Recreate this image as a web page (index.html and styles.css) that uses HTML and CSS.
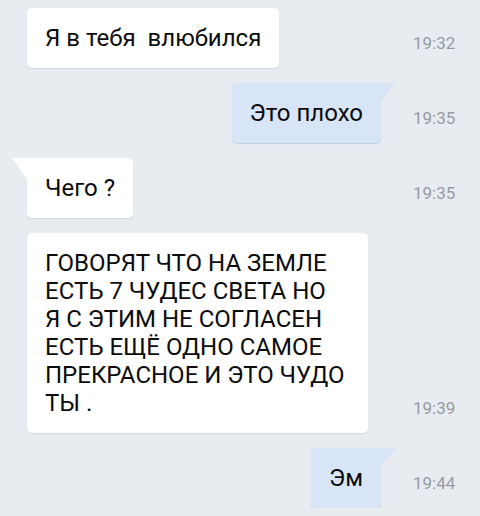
FILE: index.html
```html
<!DOCTYPE html>
<html lang="ru">
<head>
<meta charset="utf-8">
<title>Чат</title>
<link rel="stylesheet" href="styles.css">
</head>
<body>
<div class="chat">
  <div class="row in">
    <div class="msg"><div class="bubble no-tail">Я в тебя  влюбился</div></div>
    <div class="time">19:32</div>
  </div>
  <div class="row out">
    <div class="msg"><div class="bubble">Это плохо</div></div>
    <div class="time">19:35</div>
  </div>
  <div class="row in">
    <div class="msg"><div class="bubble">Чего ?</div></div>
    <div class="time">19:35</div>
  </div>
  <div class="row in">
    <div class="msg"><div class="bubble no-tail long">ГОВОРЯТ ЧТО НА ЗЕМЛЕ ЕСТЬ 7 ЧУДЕС СВЕТА НО Я С ЭТИМ НЕ СОГЛАСЕН ЕСТЬ ЕЩЁ ОДНО САМОЕ ПРЕКРАСНОЕ И ЭТО ЧУДО ТЫ .</div></div>
    <div class="time">19:39</div>
  </div>
  <div class="row out">
    <div class="msg"><div class="bubble">Эм</div></div>
    <div class="time">19:44</div>
  </div>
</div>
</body>
</html>
```

FILE: styles.css
```css
html, body {
  margin: 0;
  padding: 0;
  background: #e8ecf1;
}

body {
  font-family: Roboto, "Noto Sans", sans-serif;
  color: #0c0c0c;
}

.chat {
  display: flex;
  flex-direction: column;
  gap: 15px;
  padding: 8px 0 0 27px;
}

.row {
  display: flex;
  align-items: flex-end;
  gap: 16px;
}

.msg {
  width: 370px;
  display: flex;
}

.row.out .msg {
  justify-content: flex-end;
}

.bubble {
  position: relative;
  box-sizing: border-box;
  max-width: 341px;
  padding: 16px 18px;
  font-size: 24px;
  line-height: 28px;
  white-space: pre-wrap;
  border-radius: 5px;
  background: #ffffff;
  box-shadow: 0 1px 1px rgba(60, 80, 110, 0.12);
}

.row.in .bubble {
  border-top-left-radius: 0;
}

.row.in .bubble.no-tail {
  border-top-left-radius: 5px;
}

.row.in .bubble::before {
  content: "";
  position: absolute;
  top: 0;
  left: -15px;
  width: 15px;
  height: 21px;
  background: #ffffff;
  clip-path: polygon(0 0, 100% 0, 100% 100%);
}

.row.in .bubble.no-tail::before {
  display: none;
}

.row.out .bubble {
  margin-right: 16px;
  background: #d8e5f7;
  border-top-right-radius: 0;
  box-shadow: 0 1px 1px rgba(60, 90, 140, 0.2);
}

.row.out .bubble::before {
  content: "";
  position: absolute;
  top: 0;
  right: -15px;
  width: 15px;
  height: 18px;
  background: #d8e5f7;
  clip-path: polygon(0 0, 100% 0, 0 100%);
}

.bubble.long {
  width: 341px;
  padding-right: 22.5px;
}

.time {
  font-size: 17px;
  line-height: 20px;
  color: #979b9f;
  padding-bottom: 15px;
}
```
